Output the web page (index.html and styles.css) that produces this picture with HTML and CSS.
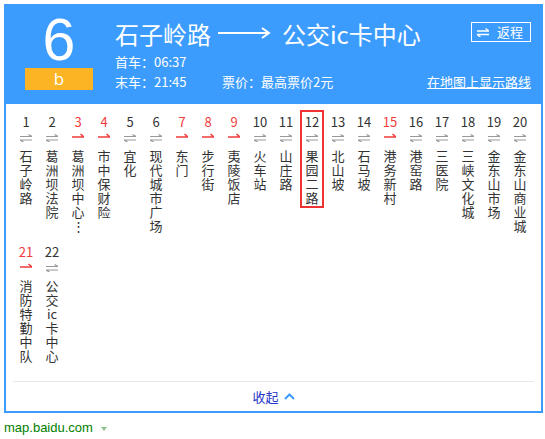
FILE: index.html
```html
<!DOCTYPE html>
<html lang="zh-CN">
<head>
<meta charset="utf-8">
<title>6b路公交线路</title>
<link rel="stylesheet" href="styles.css">
</head>
<body>
<div class="card">
  <header class="head">
    <div class="line-no">
      <div class="num">6</div>
      <div class="sub">b</div>
    </div>
    <div class="info">
      <div class="top">
        <div class="route">
          <span>石子岭路</span>
          <svg class="route-arrow" width="54" height="12" viewBox="0 0 54 12"><path d="M0 6H51M44 1L51 6L44 11" fill="none" stroke="#fff" stroke-width="2"/></svg>
          <span>公交ic卡中心</span>
        </div>
        <a class="reverse" href="#">
          <svg width="12" height="9" viewBox="0 0 12 9"><path d="M0 3H12L8.5 0.5M12 6.5H0L3.5 9" fill="none" stroke="#fff" stroke-width="1.3"/></svg>
          <span>返程</span>
        </a>
      </div>
      <div class="times">
        <div class="row">首车：06:37</div>
        <div class="row">
          <span class="last">末车：21:45</span>
          <span>票价：最高票价2元</span>
          <a class="map-link" href="#">在地图上显示路线</a>
        </div>
      </div>
    </div>
  </header>

  <div class="stops">
    <div class="stop"><div class="stop-card"><span class="no">1</span><svg class="dir"><use href="#both"/></svg><span class="name">石子岭路</span></div></div>
    <div class="stop"><div class="stop-card"><span class="no">2</span><svg class="dir"><use href="#both"/></svg><span class="name">葛洲坝法院</span></div></div>
    <div class="stop one"><div class="stop-card"><span class="no">3</span><svg class="dir"><use href="#one"/></svg><span class="name">葛洲坝中心⋮</span></div></div>
    <div class="stop one"><div class="stop-card"><span class="no">4</span><svg class="dir"><use href="#one"/></svg><span class="name">市中保财险</span></div></div>
    <div class="stop"><div class="stop-card"><span class="no">5</span><svg class="dir"><use href="#both"/></svg><span class="name">宜化</span></div></div>
    <div class="stop"><div class="stop-card"><span class="no">6</span><svg class="dir"><use href="#both"/></svg><span class="name">现代城市广场</span></div></div>
    <div class="stop one"><div class="stop-card"><span class="no">7</span><svg class="dir"><use href="#one"/></svg><span class="name">东门</span></div></div>
    <div class="stop one"><div class="stop-card"><span class="no">8</span><svg class="dir"><use href="#one"/></svg><span class="name">步行街</span></div></div>
    <div class="stop one"><div class="stop-card"><span class="no">9</span><svg class="dir"><use href="#one"/></svg><span class="name">夷陵饭店</span></div></div>
    <div class="stop"><div class="stop-card"><span class="no">10</span><svg class="dir"><use href="#both"/></svg><span class="name">火车站</span></div></div>
    <div class="stop"><div class="stop-card"><span class="no">11</span><svg class="dir"><use href="#both"/></svg><span class="name">山庄路</span></div></div>
    <div class="stop current"><div class="stop-card"><span class="no">12</span><svg class="dir"><use href="#both"/></svg><span class="name">果园二路</span></div></div>
    <div class="stop"><div class="stop-card"><span class="no">13</span><svg class="dir"><use href="#both"/></svg><span class="name">北山坡</span></div></div>
    <div class="stop"><div class="stop-card"><span class="no">14</span><svg class="dir"><use href="#both"/></svg><span class="name">石马坡</span></div></div>
    <div class="stop one"><div class="stop-card"><span class="no">15</span><svg class="dir"><use href="#one"/></svg><span class="name">港务新村</span></div></div>
    <div class="stop"><div class="stop-card"><span class="no">16</span><svg class="dir"><use href="#both"/></svg><span class="name">港窑路</span></div></div>
    <div class="stop"><div class="stop-card"><span class="no">17</span><svg class="dir"><use href="#both"/></svg><span class="name">三医院</span></div></div>
    <div class="stop"><div class="stop-card"><span class="no">18</span><svg class="dir"><use href="#both"/></svg><span class="name">三峡文化城</span></div></div>
    <div class="stop"><div class="stop-card"><span class="no">19</span><svg class="dir"><use href="#both"/></svg><span class="name">金东山市场</span></div></div>
    <div class="stop"><div class="stop-card"><span class="no">20</span><svg class="dir"><use href="#both"/></svg><span class="name">金东山商业城</span></div></div>
    <div class="stop one"><div class="stop-card"><span class="no">21</span><svg class="dir"><use href="#one"/></svg><span class="name">消防特勤中队</span></div></div>
    <div class="stop"><div class="stop-card"><span class="no">22</span><svg class="dir"><use href="#both"/></svg><span class="name">公交ic卡中心</span></div></div>
  </div>

  <a class="fold" href="#">
    <span>收起</span>
    <svg width="11" height="7" viewBox="0 0 11 7"><path d="M1 6L5.5 1.5L10 6" fill="none" stroke="#3c9cfd" stroke-width="2"/></svg>
  </a>
</div>

<div class="src"><span>map.baidu.com</span><i class="caret"></i></div>

<!-- direction markers: both ways / one way -->
<svg class="defs" width="0" height="0">
  <symbol id="both" viewBox="0 0 12 9"><path d="M0 3.5H12L8.5 1.5M12 7H0L3.5 9" fill="none" stroke="#999" stroke-width="1.2"/></symbol>
  <symbol id="one" viewBox="0 0 12 9"><path d="M0 4H12L8.5 1" fill="none" stroke="#f03c3c" stroke-width="1.5"/></symbol>
</svg>
</body>
</html>
```

FILE: styles.css
```css
* {
  box-sizing: border-box;
}

body {
  margin: 0;
  padding: 4px;
  background: #fff;
  color: #333;
  font-family: "Noto Sans CJK SC", sans-serif;
}

a {
  color: inherit;
  text-decoration: none;
}

.card {
  width: 539px;
  height: 409px;
  border: 2px solid #3c9cfd;
  display: flex;
  flex-direction: column;
}

/* blue header */
.head {
  height: 98px;
  flex-shrink: 0;
  display: flex;
  background: #3c9cfd;
  color: #fff;
}

.line-no {
  width: 68px;
  margin: 6px 0 0 19px;
  display: flex;
  flex-direction: column;
  align-items: center;
}

.line-no .num {
  font-family: "Liberation Sans", Arial, sans-serif;
  font-size: 59px;
  line-height: 56px;
}

.line-no .sub {
  width: 68px;
  height: 22px;
  background: #fdb424;
  text-align: center;
  font-family: "Open Sans", sans-serif;
  font-size: 17px;
  line-height: 22px;
}

.info {
  flex: 1;
  margin: 16px 10px 0 22px;
}

.top {
  display: flex;
  justify-content: space-between;
  align-items: flex-start;
}

.route {
  display: flex;
  align-items: center;
  font-size: 24px;
  line-height: 24px;
}

.route-arrow {
  margin: -3px 10px 0 7px;
}

.reverse {
  display: flex;
  align-items: center;
  height: 20px;
  padding: 0 7px 0 5px;
  border: 1px solid #fff;
  font-size: 13px;
  line-height: 18px;
}

.reverse svg {
  margin-right: 8px;
}

.times {
  margin-top: 6px;
  font-size: 13px;
  line-height: 20px;
}

.row {
  display: flex;
}

.last {
  width: 107px;
}

.map-link {
  margin-left: auto;
  text-decoration: underline;
}

/* stop list */
.stops {
  height: 266px;
  flex-shrink: 0;
  padding: 6px 7px 0;
  display: flex;
  flex-wrap: wrap;
  align-content: flex-start;
}

.stop {
  width: 26px;
  height: 130px;
}

.stop-card {
  width: 24px;
  margin: 0 auto;
  padding: 2px 0 1px;
  border: 2px solid transparent;
  display: flex;
  flex-direction: column;
  align-items: center;
}

.stop.current .stop-card {
  border-color: #f03232;
}

.no {
  font-size: 13px;
  line-height: 16px;
}

.stop.one .no {
  color: #f03c3c;
}

.dir {
  width: 12px;
  height: 9px;
  margin-top: 3px;
}

.name {
  width: 14px;
  margin-top: 7px;
  font-size: 13px;
  line-height: 14px;
  text-align: center;
  word-break: break-all;
}

/* collapse bar */
.fold {
  height: 30px;
  margin: 11px 7px 0;
  border-top: 1px solid #e8e8e8;
  display: flex;
  align-items: center;
  justify-content: center;
  font-size: 13px;
  color: #2635c7;
}

.fold svg {
  margin-left: 5px;
}

/* source line */
.src {
  margin-top: 7px;
  display: flex;
  align-items: center;
  font-family: "Liberation Sans", Arial, sans-serif;
  font-size: 13px;
  line-height: 15px;
  color: #008000;
}

.caret {
  width: 0;
  height: 0;
  margin: 2px 0 0 8px;
  border-left: 3px solid transparent;
  border-right: 3px solid transparent;
  border-top: 4px solid #8cc48c;
}

.defs {
  position: absolute;
}
```
